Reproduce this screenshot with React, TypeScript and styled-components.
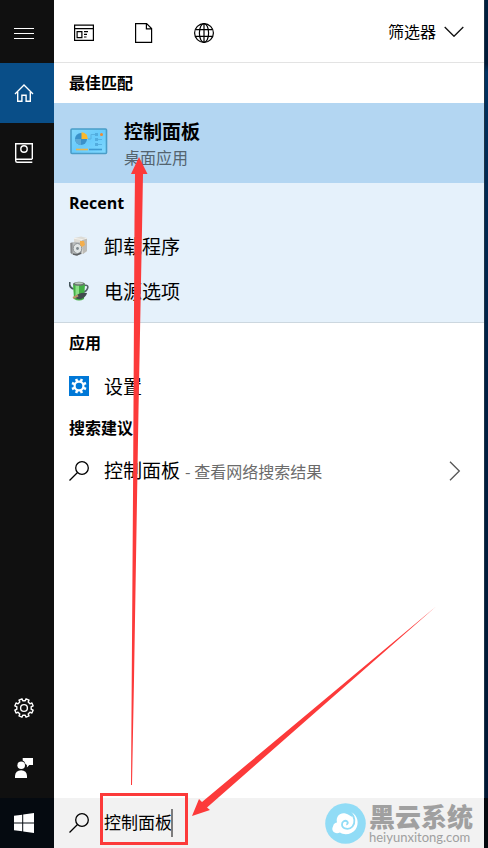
import React from 'react';
import styled, { createGlobalStyle, css } from 'styled-components';

const Global = createGlobalStyle`
  * { box-sizing: border-box; }
  html, body { margin: 0; padding: 0; }
  body {
    font-family: "Open Sans", "Noto Sans CJK SC", sans-serif;
    color: #000;
    background: #fff;
  }
  button, input { font: inherit; color: inherit; }
  svg { display: block; flex: none; }
`;

const cjk = css`font-family: "Noto Sans CJK SC", sans-serif;`;

const bareButton = css`
  border: 0;
  padding: 0;
  margin: 0;
  background: transparent;
  cursor: pointer;
`;

const Screen = styled.div`
  position: relative;
  display: flex;
  flex-direction: column;
  min-height: 100vh;
  overflow: hidden;
`;

const Upper = styled.div`
  display: flex;
  flex: 1;
`;

const Rail = styled.nav`
  display: flex;
  flex-direction: column;
  width: 54px;
  flex: none;
  background: #101010;
  color: #fff;
`;

const RailButton = styled.button<{ $active?: boolean; $tall?: boolean }>`
  ${bareButton}
  display: flex;
  align-items: center;
  width: 100%;
  height: ${p => (p.$tall ? 63 : 60)}px;
  padding: ${p => (p.$tall ? '4px 0 0 14px' : '0 0 0 14px')};
  background: ${p => (p.$active ? '#094e88' : 'transparent')};
`;

const Spacer = styled.div`
  flex: 1;
`;

const Panel = styled.main`
  display: flex;
  flex-direction: column;
  flex: 1;
  min-width: 0;
  background: #fff;
`;

const Desktop = styled.div`
  width: 4px;
  flex: none;
  border-left: 1px solid #1d3347;
  background: linear-gradient(#00203f 0%, #001a38 8%, #003261 9%, #002a54 20%, #001f42 50%, #001b38 80%, #001734 100%);
`;

const Toolbar = styled.header`
  display: flex;
  align-items: center;
  height: 63px;
  padding: 4px 20px 0;
  border-bottom: 1px solid #e3e3e3;
`;

const Scopes = styled.div`
  display: flex;
  gap: 40px;
`;

const ScopeButton = styled.button`
  ${bareButton}
`;

const FilterButton = styled.button`
  ${bareButton}
  ${cjk}
  display: flex;
  align-items: center;
  gap: 8px;
  margin-left: auto;
  padding-bottom: 4px;
  font-size: 16px;
  line-height: 24px;
`;

const SectionTitle = styled.h2`
  ${cjk}
  margin: 0;
  padding: 0 15px 2px;
  font-size: 16px;
  line-height: 38px;
  font-weight: 700;
`;

const LatinTitle = styled(SectionTitle)`
  padding-bottom: 0;
  font-family: "Open Sans", sans-serif;
  line-height: 40px;
`;

const BestMatch = styled.button`
  ${bareButton}
  display: flex;
  align-items: center;
  gap: 16px;
  width: 100%;
  height: 80px;
  padding: 0 16px 4px;
  background: #b3d6f2;
  text-align: left;
`;

const BestText = styled.span`
  ${cjk}
  display: flex;
  flex-direction: column;
  padding-top: 6px;
`;

const BestName = styled.span`
  font-size: 19px;
  line-height: 27px;
  font-weight: 700;
`;

const BestKind = styled.span`
  font-size: 16px;
  line-height: 27px;
  color: #54646f;
`;

const Recent = styled.section`
  height: 140px;
  background: #e5f1fb;
  border-bottom: 1px solid #ccd7df;
`;

const Row = styled.button`
  ${bareButton}
  ${cjk}
  display: flex;
  align-items: center;
  gap: 15px;
  width: 100%;
  height: 45px;
  padding: 0 23px 0 15px;
  font-size: 19px;
  line-height: 28px;
  text-align: left;
  white-space: nowrap;
`;

const Hint = styled.span`
  margin-left: 5px;
  font-size: 16px;
  color: #6b6b6b;
`;

const RowLabel = styled.span`
  flex: 1;
`;

const Taskbar = styled.footer`
  display: flex;
  height: 50px;
  flex: none;
`;

const Start = styled.button`
  ${bareButton}
  display: flex;
  align-items: center;
  width: 54px;
  padding-left: 14px;
  background: #050a10;
`;

const SearchBar = styled.div`
  display: flex;
  flex: 1;
  align-items: center;
  padding: 0 11px 0 15px;
  background: #f2f2f2;
`;

const SearchField = styled.label`
  display: flex;
  flex: 1;
  align-items: center;
  gap: 15px;
`;

const Typed = styled.span`
  display: flex;
  align-items: center;
`;

const SearchInput = styled.input`
  ${cjk}
  width: 67px;
  height: 28px;
  padding: 0 0 3px;
  border: 0;
  outline: 0;
  background: transparent;
  font-size: 17px;
`;

const Caret = styled.span`
  width: 2px;
  height: 28px;
  background: #7c7c7c;
`;

const DesktopEdge = styled.div`
  width: 4px;
  background: #03080e;
`;

const Brand = styled.a`
  display: flex;
  align-items: center;
  gap: 3px;
  color: #a0a0a0;
  text-decoration: none;
`;

const BrandText = styled.span`
  display: flex;
  flex-direction: column;
  gap: 1px;
`;

const BrandName = styled.span`
  ${cjk}
  font-size: 26px;
  line-height: 26px;
  font-weight: 900;
`;

const BrandUrl = styled.span`
  font-family: Lato, sans-serif;
  font-size: 13px;
  line-height: 14px;
`;

const Annotations = styled.svg`
  position: absolute;
  inset: 0;
  width: 100%;
  height: 100%;
  pointer-events: none;
`;

const gearPath = (teeth: number, c: number, outer: number, inner: number) => {
  const step = (Math.PI * 2) / teeth;
  const points: string[] = [];
  for (let i = 0; i < teeth; i++) {
    const a = i * step - Math.PI / 2 + step / 2;
    const at = (r: number, o: number) =>
      `${(c + r * Math.cos(a + o * step)).toFixed(2)} ${(c + r * Math.sin(a + o * step)).toFixed(2)}`;
    points.push(at(inner, -0.28), at(outer, -0.22), at(outer, 0.22), at(inner, 0.28));
  }
  return `M${points.join('L')}Z`;
};

const MenuIcon = () => (
  <svg width="20" height="12" viewBox="0 0 20 12" stroke="#fff" strokeWidth="1">
    <path d="M0 .5h20M0 5.5h20M0 10.5h20" />
  </svg>
);

const HomeIcon = () => (
  <svg width="20" height="20" viewBox="0 0 20 20" fill="none" stroke="#fff" strokeWidth="1.4">
    <path d="M1 11 10 2l9 9M3.7 9v9.3h4.2v-6.1h4.2v6.1h4.2V9" />
  </svg>
);

const NotebookIcon = () => (
  <svg width="20" height="20" viewBox="0 0 20 20" fill="none" stroke="#fff" strokeWidth="1.4">
    <path d="M18.3 16V.7H1.7v17q0 1.5 1.5 1.5h15.1M1.7 16.2h16.6" />
    <circle cx="10" cy="6" r="3.2" />
  </svg>
);

const SettingsIcon = () => (
  <svg width="20" height="20" viewBox="0 0 20 20" fill="none" stroke="#fff" strokeWidth="1.4" strokeLinejoin="round">
    <path d={gearPath(8, 10, 9.4, 7.3)} />
    <circle cx="10" cy="10" r="3.4" />
  </svg>
);

const FeedbackIcon = () => (
  <svg width="20" height="20" viewBox="0 0 20 20" fill="#fff">
    <path d="M8.7 0H19v7h-3.7l-2.4 2.6V7.1L11.4 6Q10.8 3.4 8.7 2.6Z" />
    <circle cx="7.2" cy="7.2" r="3.8" />
    <path d="M1 20v-2.2Q1.4 12.6 7.1 12.3q5.6.3 5.9 5.5V20Z" />
  </svg>
);

const WindowsIcon = () => (
  <svg width="20" height="20" viewBox="0 0 20 20" fill="#fff">
    <path d="M0 2.8 8.2 1.7v7.8H0ZM9.2 1.5 20 0v9.5H9.2ZM0 10.5h8.2v7.8L0 17.2ZM9.2 10.5H20V20L9.2 18.5Z" />
  </svg>
);

const AppsIcon = () => (
  <svg width="20" height="20" viewBox="0 0 20 20" fill="none" stroke="#000" strokeWidth="1.2">
    <path d="M.6 2.1h18.8v15.3H.6ZM.6 5.6h18.8M3.1 8.6h4.8v6H3.1ZM10 8.6h4M10 11.3h3M10 14h2.5" />
  </svg>
);

const DocumentIcon = () => (
  <svg width="20" height="20" viewBox="0 0 20 20" fill="none" stroke="#000" strokeWidth="1.2">
    <path d="M1.6.6h11l5 5v13.8h-16ZM12.4.6v5.2h5.2" />
  </svg>
);

const GlobeIcon = () => (
  <svg width="20" height="20" viewBox="0 0 20 20" fill="none" stroke="#000" strokeWidth="1.2">
    <circle cx="10" cy="10" r="9.4" />
    <ellipse cx="10" cy="10" rx="4.6" ry="9.4" />
    <path d="M1.5 6.6h17M1.5 13.4h17M10 .6v18.8" />
  </svg>
);

const ChevronDown = () => (
  <svg width="20" height="12" viewBox="0 0 20 12" fill="none" stroke="#111" strokeWidth="1.3">
    <path d="m.7 2 9.3 9.3L19.3 2" />
  </svg>
);

const ChevronRight = () => (
  <svg width="12" height="20" viewBox="0 0 12 20" fill="none" stroke="#555" strokeWidth="1.3">
    <path d="m1 .8 9.3 9.2L1 19.2" />
  </svg>
);

const SearchIcon = () => (
  <svg width="20" height="20" viewBox="0 0 20 20" fill="none" stroke="#000" strokeWidth="1.3">
    <circle cx="13" cy="7" r="6.3" />
    <path d="M8.5 11.5.5 19.5" />
  </svg>
);

const ControlPanelIcon = () => (
  <svg width="38" height="28" viewBox="0 0 38 28">
    <defs>
      <linearGradient id="panelFace" x1="0" y1="0" x2="1" y2="1">
        <stop offset="0" stopColor="#83d7fb" />
        <stop offset=".5" stopColor="#68cbfb" />
        <stop offset="1" stopColor="#80d9ff" />
      </linearGradient>
    </defs>
    <rect x="1" y="2" width="35.5" height="24.5" rx="1" fill="url(#panelFace)" stroke="#4a9dc8" strokeWidth="1.6" />
    <circle cx="11" cy="12" r="6" fill="#3a91c9" />
    <path d="M11 12V18A6 6 0 0 1 5 12Z" fill="#5cabd8" />
    <path d="M11.5 12V5.2A6.5 6.5 0 0 1 17.8 12Z" fill="#fbb92d" />
    <path d="M18 12h3V7.5h4M27 12.5h5M27 17.5h5" fill="none" stroke="#58b2e2" strokeWidth="1" />
    <path d="M25 6h3v3h-3ZM25 11h3v3h-3ZM25 16h3v3h-3Z" fill="#52addf" />
    <circle cx="31.5" cy="7.5" r="1.5" fill="#f08b32" />
    <path d="M6 22.5h12" stroke="#e9b64d" strokeWidth="1.6" />
    <path d="M19 22.5h13" stroke="#3f9bd2" strokeWidth="1.6" />
  </svg>
);

const UninstallIcon = () => (
  <svg width="20" height="20" viewBox="0 0 20 20">
    <path d="M5 2 12 .5l6 1.500v13l-4 3-9-2Z" fill="#dddcd6" />
    <path d="m13 3 5-1v13l-4 3Z" fill="#bcbbb6" />
    <path d="m5 2.3 8 1.200 5-1.300" fill="none" stroke="#f4f2ec" />
    <path d="m1 7 5-1.300 7 1V18l-6 1.500-5-1.500Z" fill="#b9bcbc" />
    <path d="M1.500 7v10l2 1V6.500Z" fill="#85888a" />
    <ellipse cx="8.500" cy="12.500" rx="4.300" ry="5" fill="#dfe4e4" stroke="#8b9092" />
    <circle cx="8.500" cy="12.500" r="1.400" fill="#7c878c" />
    <path d="M11 5h4l1 4-3 2-2-2Z" fill="#f4ae4b" />
    <path d="m4 18 4 1 4-2" fill="none" stroke="#5c6062" strokeWidth="1.400" />
  </svg>
);

const PowerIcon = () => (
  <svg width="20" height="20" viewBox="0 0 20 20">
    <path d="M.7 1v3q.5 3 4 4" fill="none" stroke="#44545a" strokeWidth="1.700" />
    <path d="M15 4.500q5-1 3.500 3-1 3-4 3.500" fill="none" stroke="#56646a" strokeWidth="1.600" />
    <path d="M4 3q6-3 12 0l-1 15q-5 3-10 0Z" fill="#43b045" />
    <path d="M6.500 4H10v10l-3.500 2Z" fill="#8bdf87" />
    <ellipse cx="10" cy="2.800" rx="6" ry="2" fill="#69756f" />
    <ellipse cx="10" cy="2.300" rx="4" ry="1" fill="#b7c9bb" />
    <path d="M6 16q4-5 12-4-1 4-6 6-4 1-6-2Z" fill="#414b4d" />
    <path d="m4 17 5-2.500" stroke="#b99067" strokeWidth="2" />
  </svg>
);

const SettingsTile = () => (
  <svg width="20" height="20" viewBox="0 0 20 20">
    <path d="M0 0h20v20H0Z" fill="#0078d7" />
    <path d={gearPath(8, 10, 7.7, 5.5)} fill="#fff" />
    <circle cx="10" cy="10" r="3.3" fill="#0078d7" />
  </svg>
);

const BrandIcon = () => (
  <svg width="41" height="41" viewBox="0 0 41 41">
    <circle cx="20.5" cy="20.5" r="20.3" fill="#91dcf6" />
    <path d="M26 9C33 12 34.5 21 30.5 26.5C27 31.5 19 32.5 15 29.500C10 32 5.500 27.500 8 23.500C8.500 20.500 10.500 19.500 12 19.500C10.500 13 15.500 9 20.500 10.500C23.500 11 25.500 13.500 27.500 14C27.800 12 27 10.500 26 9Z" fill="#fff" />
    <path d="M26 9.500C30 14 30.500 20 27.500 23.500C24 27.500 17.500 26 17 21.800C16.800 18.500 20 16.800 22.200 18.500C23.500 19.800 22.500 21.500 21.200 21.300" fill="none" stroke="#91dcf6" strokeWidth="1.8" />
  </svg>
);

const recentItems = [
  { name: '卸载程序', icon: <UninstallIcon /> },
  { name: '电源选项', icon: <PowerIcon /> },
];

export default function App() {
  return (
    <>
      <Global />
      <Screen>
        <Upper>
          <Rail>
            <RailButton $tall aria-label="菜单"><MenuIcon /></RailButton>
            <RailButton $active aria-label="主页"><HomeIcon /></RailButton>
            <RailButton aria-label="笔记本"><NotebookIcon /></RailButton>
            <Spacer />
            <RailButton aria-label="设置"><SettingsIcon /></RailButton>
            <RailButton aria-label="反馈"><FeedbackIcon /></RailButton>
          </Rail>
          <Panel>
            <Toolbar>
              <Scopes>
                <ScopeButton aria-label="应用"><AppsIcon /></ScopeButton>
                <ScopeButton aria-label="文档"><DocumentIcon /></ScopeButton>
                <ScopeButton aria-label="网页"><GlobeIcon /></ScopeButton>
              </Scopes>
              <FilterButton>筛选器<ChevronDown /></FilterButton>
            </Toolbar>
            <SectionTitle>最佳匹配</SectionTitle>
            <BestMatch>
              <ControlPanelIcon />
              <BestText>
                <BestName>控制面板</BestName>
                <BestKind>桌面应用</BestKind>
              </BestText>
            </BestMatch>
            <Recent>
              <LatinTitle>Recent</LatinTitle>
              {recentItems.map(item => (
                <Row key={item.name}>{item.icon}{item.name}</Row>
              ))}
            </Recent>
            <SectionTitle>应用</SectionTitle>
            <Row><SettingsTile />设置</Row>
            <SectionTitle>搜索建议</SectionTitle>
            <Row>
              <SearchIcon />
              <RowLabel>控制面板<Hint>- 查看网络搜索结果</Hint></RowLabel>
              <ChevronRight />
            </Row>
          </Panel>
          <Desktop />
        </Upper>
        <Taskbar>
          <Start aria-label="开始"><WindowsIcon /></Start>
          <SearchBar>
            <SearchField>
              <SearchIcon />
              <Typed>
                <SearchInput aria-label="搜索" defaultValue="控制面板" />
                <Caret />
              </Typed>
            </SearchField>
            <Brand href="#">
              <BrandIcon />
              <BrandText>
                <BrandName>黑云系统</BrandName>
                <BrandUrl>heiyunxitong.com</BrandUrl>
              </BrandText>
            </Brand>
          </SearchBar>
          <DesktopEdge />
        </Taskbar>
        <Annotations viewBox="0 0 488 848" fill="#fc3a3a" aria-hidden="true">
          <path d="M139 157 147.5 174H143L142 230 138.5 410 134 680 132 785H131L133 495 134.5 220 135 174H131Z" />
          <path d="M192 816 199 799 202 802 436 606.5 207 807.5 210 810Z" />
          <path d="M101.5 794.5h85v49h-85Z" fill="none" stroke="#fc3a3a" strokeWidth="3" />
        </Annotations>
      </Screen>
    </>
  );
}
